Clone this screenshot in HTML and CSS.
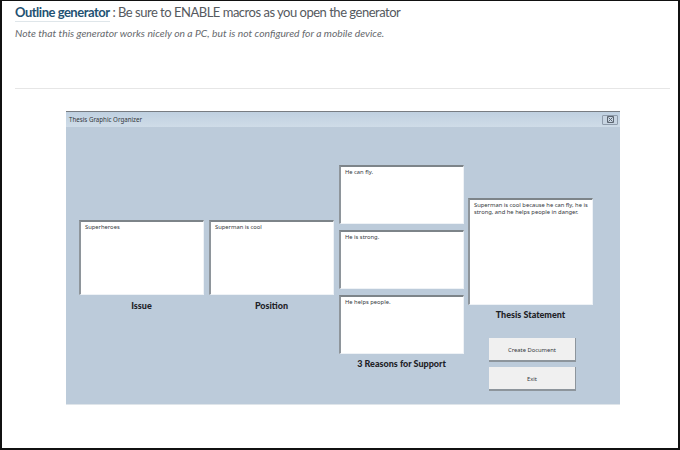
FILE: index.html
```html
<!DOCTYPE html>
<html lang="en">
<head>
<meta charset="utf-8">
<title>Outline generator</title>
<link rel="stylesheet" href="styles.css">
</head>
<body>
<main class="frame">
  <section class="intro">
    <p class="lead"><a class="lead-link">Outline generator</a> : Be sure to ENABLE macros as you open the generator</p>
    <p class="note">Note that this generator works nicely on a PC, but is not configured for a mobile device.</p>
  </section>
  <hr class="rule">
  <section class="window">
    <header class="titlebar">
      <span class="title">Thesis Graphic Organizer</span>
      <span class="close"><svg width="9" height="7" viewBox="0 0 9 7"><path d="M1.5 .5h6v6h-6zM2.5 1.5l4 4M6.5 1.5l-4 4" fill="none" stroke="#5c6570" stroke-width="1"/></svg></span>
    </header>
    <div class="body">
      <div class="col col-issue">
        <div class="box box-tall">Superheroes</div>
        <div class="label label-a">Issue</div>
      </div>
      <div class="col col-issue">
        <div class="box box-tall">Superman is cool</div>
        <div class="label label-a">Position</div>
      </div>
      <div class="col col-reasons">
        <div class="box box-reason">He can fly.</div>
        <div class="box box-reason">He is strong.</div>
        <div class="box box-reason">He helps people.</div>
        <div class="label label-b">3 Reasons for Support</div>
      </div>
      <div class="col col-thesis">
        <div class="box box-thesis">Superman is cool because he can fly, he is strong, and he helps people in danger.</div>
        <div class="label label-c">Thesis Statement</div>
        <div class="buttons">
          <button class="btn">Create Document</button>
          <button class="btn">Exit</button>
        </div>
      </div>
    </div>
  </section>
</main>
</body>
</html>
```
FILE: styles.css
```css
* { box-sizing: border-box; }
html, body { margin: 0; height: 100%; background: #fff; }
.frame {
  width: 680px;
  height: 450px;
  border: solid #111;
  border-width: 1px 2px 2px 2px;
  padding: 0 8px 0 13px;
  overflow: hidden;
  font-family: "Lato", "Liberation Sans", sans-serif;
}
.intro { height: 85px; }
.lead {
  margin: 2px 0 0;
  font-size: 13px;
  letter-spacing: -0.49px;
  line-height: 18px;
  color: #55595e;
}
.lead-link {
  font-weight: 700;
  color: #1f5273;
  border-bottom: 1px solid #dfe6ea;
  padding-bottom: 1px;
}
.note {
  margin: 5px 0 0;
  font-size: 10.3px;
  line-height: 14px;
  font-style: italic;
  color: #66696d;
}
.rule {
  margin: 0;
  border: 0;
  border-top: 1px solid #e6e6e6;
}
.window {
  width: 554px;
  height: 294px;
  margin: 22px 0 0 51px;
  background: #bccbda;
  border-top: 1px solid #777c82;
  border-bottom: 1px solid #dfe5ea;
  display: flex;
  flex-direction: column;
  font-family: "Noto Sans", "Liberation Sans", sans-serif;
}
.titlebar {
  height: 15px;
  flex: none;
  background: linear-gradient(#bfd0e0, #cfdce8);
  display: flex;
  align-items: center;
  justify-content: space-between;
  padding: 0 2px 0 3px;
}
.title { font-size: 6.2px; color: #33383d; }
.close {
  width: 16px;
  height: 10px;
  border: 1px solid #8f9cab;
  border-radius: 1px;
  display: flex;
  align-items: center;
  justify-content: center;
  background: #c8d5e2;
}
.body {
  flex: 1;
  display: flex;
  gap: 5px;
  padding-left: 13px;
}
.col { display: flex; flex-direction: column; width: 125px; }
.col-issue { margin-top: 93px; }
.col-reasons { margin-top: 38px; gap: 6px; }
.col-thesis { margin-top: 71px; margin-left: -1px; }
.box {
  background: #fff;
  border: 1px solid #eef2f6;
  border-top: 2px solid #7d8489;
  border-left: 2px solid #8e959b;
  padding: 2px 4px;
  font-size: 5.8px;
  line-height: 7px;
  color: #33373b;
}
.box-tall { height: 75px; }
.box-reason { height: 59px; }
.box-thesis { height: 107px; }
.label {
  font-family: "Lato", "Liberation Sans", sans-serif;
  font-weight: 900;
  font-size: 9px;
  line-height: 13px;
  text-align: center;
  color: #1e2227;
}
.label-a { margin-top: 4px; }
.label-b { margin-top: -3px; }
.label-c { margin-top: 3px; }
.buttons {
  display: flex;
  flex-direction: column;
  gap: 5px;
  margin: 17px 0 0 21px;
}
.btn {
  width: 87px;
  height: 24px;
  padding: 1px 0 0;
  background: #f0f0f0;
  border: 0;
  border-right: 1px solid #8d959c;
  border-bottom: 2px solid #8d959c;
  font-family: "Noto Sans", "Liberation Sans", sans-serif;
  font-size: 5.8px;
  color: #33373b;
}
```
